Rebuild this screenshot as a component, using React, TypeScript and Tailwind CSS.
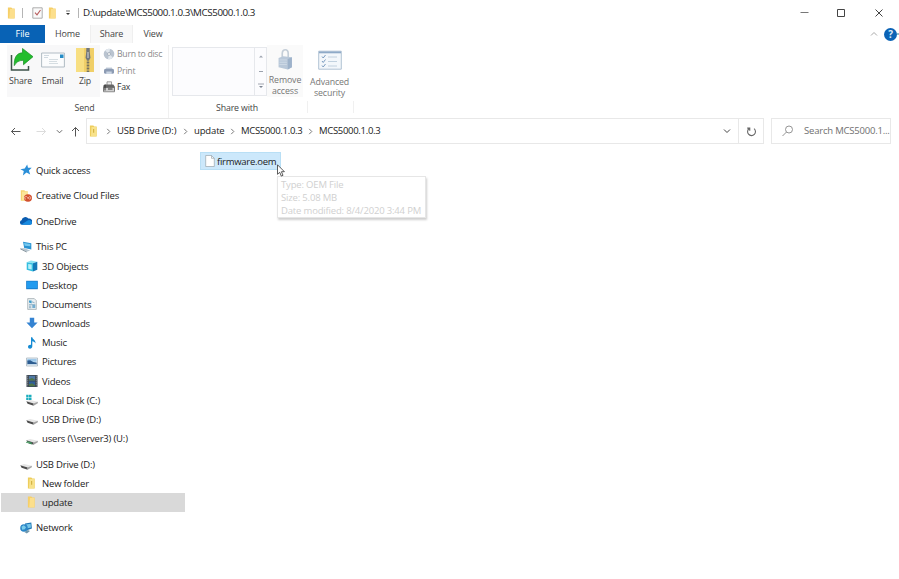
import type { ReactNode } from 'react';
import clsx from 'clsx';

type IconName =
    | 'star' | 'creative' | 'onedrive' | 'pc' | 'objects' | 'desktop' | 'documents' | 'downloads'
    | 'music' | 'pictures' | 'videos' | 'disk' | 'usb' | 'netdrive' | 'zipFolder' | 'folder' | 'network';

interface NavItem {
    label: string;
    icon: IconName;
    level: number;
    selected?: boolean;
}

const navGroups: NavItem[][] = [
    [{ label: 'Quick access', icon: 'star', level: 0 }],
    [{ label: 'Creative Cloud Files', icon: 'creative', level: 0 }],
    [{ label: 'OneDrive', icon: 'onedrive', level: 0 }],
    [
        { label: 'This PC', icon: 'pc', level: 0 },
        { label: '3D Objects', icon: 'objects', level: 1 },
        { label: 'Desktop', icon: 'desktop', level: 1 },
        { label: 'Documents', icon: 'documents', level: 1 },
        { label: 'Downloads', icon: 'downloads', level: 1 },
        { label: 'Music', icon: 'music', level: 1 },
        { label: 'Pictures', icon: 'pictures', level: 1 },
        { label: 'Videos', icon: 'videos', level: 1 },
        { label: 'Local Disk (C:)', icon: 'disk', level: 1 },
        { label: 'USB Drive (D:)', icon: 'usb', level: 1 },
        { label: 'users (\\\\server3) (U:)', icon: 'netdrive', level: 1 },
    ],
    [
        { label: 'USB Drive (D:)', icon: 'usb', level: 0 },
        { label: 'New folder', icon: 'zipFolder', level: 1 },
        { label: 'update', icon: 'folder', level: 1, selected: true },
    ],
    [{ label: 'Network', icon: 'network', level: 0 }],
];

const drive = (
    <>
        <path d="M.3 7.300 4 6.100l7.800 1.600L8 10.100z" fill="#e6e6e6" />
        <path d="M.3 7.300 7.600 9.500v2.200L1.600 9.800z" fill="#4d4d4d" />
        <path d="m7.600 9.500 4.200-1.800v1.600l-4.200 2.400z" fill="#a3a3a3" />
    </>
);

const icons: Record<IconName, ReactNode> = {
    star: <path d="m7.2.6.8 3.2 3.7-.1-2.8 2.700 1.300 4.100-3.700-1.900-3.600 3 .9-4.500L.4 5.200l4.300-.8z" fill="#2b8fd8" />,
    creative: (
        <>
            <path d="M.8.3h3.500l1 1h2.400v9.500H.8z" fill="#f5d470" />
            <path d="M2 1.600h6v9H2z" fill="#fbe59a" />
            <ellipse cx="8" cy="8" rx="4" ry="3.7" fill="#d2502f" />
            <path d="M6 9.200a1.400 1.400 0 1 1 1.300-2l1.600 1.600a1.200 1.200 0 1 0 .2-2L7.600 8.500" fill="none" stroke="#fbd0c0" strokeWidth=".7" />
        </>
    ),
    onedrive: (
        <>
            <path d="M2.200 9.800A2.300 2.300 0 0 1 1.600 5.300 3.800 3.800 0 0 1 8.400 3.600a3.100 3.100 0 0 1 1.400 6.200z" fill="#0a5cb0" />
            <path d="M1.500 9.500 7.600 5.600A2.800 2.800 0 0 1 12 7.900a2 2 0 0 1-2 1.900H2.200z" fill="#188be0" />
        </>
    ),
    pc: (
        <>
            <path d="m3 .8 8.300 1.400v6.200L4.200 7z" fill="#2a93d1" />
            <path d="m4 2 6.300 1v2.300L4.700 4.800z" fill="#74c8ef" />
            <path d="m.4 7.300 4.200-.1 5.600 2.300-3.500 1.200z" fill="#b6c5cf" />
            <path d="m.4 7.300 6.300 3.400v.8L.4 8.300z" fill="#6f7f8a" />
        </>
    ),
    objects: (
        <>
            <path d="M.7 2.200 5 .5l6.300 1.200L7 3.200z" fill="#8be3f3" />
            <path d="M.7 2.200 7 3.200v8.400L.7 9.800z" fill="#35bfe0" />
            <path d="m7 3.200 4.300-1.500v8.100L7 11.600z" fill="#1279b8" />
            <path d="M2.200 4 5.700 4.600v5L2.200 8.800z" fill="#b7f0f9" />
        </>
    ),
    desktop: (
        <>
            <path d="M.2 1.800h11.600v8.400H.2z" fill="#1374c4" />
            <path d="M.8 2.400h10.400v7H.8z" fill="#229bef" />
        </>
    ),
    documents: (
        <>
            <path d="M1.700.6h6.600l2 2v8.800H1.700z" fill="#eaf0f3" stroke="#98a3a9" strokeWidth=".7" />
            <path d="M3 2.600h2.600v3L3 4.600z" fill="#3f9ccb" />
            <path d="m6 3.800 2.600 1M3 6.700h6.200M3 8.200h2.300M3 9.700h2.300" stroke="#6d95b0" strokeWidth=".7" />
            <path d="M6.300 6.800h3v3.200h-3z" fill="#74add0" />
        </>
    ),
    downloads: <path d="M3.800.7h4.400v4.700h3.400L6 11.200.4 5.400h3.400z" fill="#3483d2" />,
    music: <path d="M5 .3h1.300c.3 2.400 3.700 2.700 3.200 6.300-.6-1.600-1.900-2.100-3.200-2.300v5c0 1.400-1 2.400-2.300 2.400S2 10.800 2 9.700s1.400-2.100 3-1.800z" fill="#168bd3" />,
    pictures: (
        <>
            <path d="M.5 2h11v8H.5z" fill="#f4f8fb" stroke="#9eacb6" strokeWidth=".7" />
            <path d="M1.300 2.800h9.400v3H1.300z" fill="#9cc8ea" />
            <path d="M1.300 4.500 4.200 4.300l3 1.800 3.500.5v1.800H1.300z" fill="#2c5c90" />
            <path d="M1.300 8h9.400v1.200H1.300z" fill="#c5daea" />
        </>
    ),
    videos: (
        <>
            <path d="M.5 0h11v12H.5z" fill="#3a444e" />
            <path d="M3 .8h6v4.800H3z" fill="#4f78a5" />
            <path d="M3 6.400h6v4.800H3z" fill="#30609a" />
            <path d="M3 4.200 6 3l3 1.800v.8H3zM3 9.200l3-1 3 2v1H3z" fill="#4f7548" />
            <path d="M1.700.7v10.600M10.300.7v10.600" stroke="#bcc4ca" strokeWidth=".8" strokeDasharray="1 1" />
        </>
    ),
    disk: (
        <>
            {drive}
            <path d="M.2.8h2.400v2.300H.2zM3 .8h2.500v2.300H3zM.2 3.500h2.400v2.400H.2zM3 3.500h2.500v2.400H3z" fill="#1baebe" />
        </>
    ),
    usb: drive,
    netdrive: (
        <>
            {drive}
            <path d="M1.300 8 5.800 9.400v2.200L1.300 10.100z" fill="#3e8a5a" />
            <path d="M0 9.400h3.500" stroke="#65aa79" strokeWidth="1" />
        </>
    ),
    zipFolder: (
        <>
            <path d="M1.900.6h3.400l1 1h2.400v9.800H1.900z" fill="#edcd5c" />
            <path d="M3.500 2h4.800v9.200H2.900z" fill="#f8e28b" />
            <path d="M5 4h1.200v3.800H5z" fill="#d4b446" />
        </>
    ),
    folder: (
        <>
            <path d="M1.900.6h3.400l1 1h2.400v9.800H1.900z" fill="#f6cf68" />
            <path d="M4 2h4.400v9.200H3.300z" fill="#fcdf8c" />
        </>
    ),
    network: (
        <>
            <path d="M5 1.400 11.300.5l.6 6-5.600 2z" fill="#1f77b4" />
            <path d="m6 2.400 4.600-.7.4 3.900-4.200 1z" fill="#76c6ea" />
            <circle cx="4" cy="6" r="3.8" fill="#2b86c7" />
            <path d="M1.500 4.800 3.800 3.200l2.200 2-1.200 2-2.600.6z" fill="#7accea" />
            <path d="m4.400 10 3.400-2 2.200 1-3.200 2.600z" fill="#6f97ad" />
        </>
    ),
};

function Icon({ name, className = 'size-3' }: { name: IconName; className?: string }) {
    return (
        <svg viewBox="0 0 12 12" className={clsx('shrink-0', className)}>
            {icons[name]}
        </svg>
    );
}

function Chevron({ className }: { className?: string }) {
    return (
        <svg viewBox="0 0 8 8" className={clsx('shrink-0 fill-none', className)} stroke="currentColor">
            <path d="m1 2.500 3 3 3-3" />
        </svg>
    );
}

function TitleBar() {
    return (
        <div className="flex h-[25px] items-center pl-[6px]">
            <Icon name="folder" />
            <div className="ml-[4px] h-[10px] w-px bg-[#b5b5b5]" />
            <svg viewBox="0 0 11 12" className="ml-[9px] h-3 w-[11px]" fill="none">
                <path d="M.8.8h9.400v10.400H.8z" fill="#fafafa" stroke="#999" strokeWidth=".8" />
                <path d="m3 5.700 2 2.200L8.500 3" stroke="#b65a5a" strokeWidth="1.1" />
            </svg>
            <Icon name="folder" className="ml-[4px] size-3" />
            <svg viewBox="0 0 6 6" className="ml-[6px] size-1.5">
                <path d="M1 1h4" stroke="#555" strokeWidth=".8" />
                <path d="M1 3h4L3 5z" fill="#333" />
            </svg>
            <div className="ml-[7px] h-[10px] w-px bg-[#b5b5b5]" />
            <span className="ml-[4px] pt-px text-[9.8px] tracking-[-0.42px] text-[#222]">D:\update\MCS5000.1.0.3\MCS5000.1.0.3</span>
            <svg viewBox="0 0 90 12" className="mr-[13px] ml-auto h-3 w-[90px]" fill="none" stroke="#444">
                <path d="M4.500 5.500h8" stroke="#777" />
                <path d="M41.500 2.500h7v7h-7z" />
                <path d="m79.500 2.500 7 7m0-7-7 7" />
            </svg>
        </div>
    );
}

function Tabs() {
    return (
        <div className="flex h-[18px] text-[9px] tracking-[-0.12px] text-[#444]">
            <div className="flex w-[45px] items-center justify-center bg-[#0862b5] text-white">File</div>
            <div className="flex w-[45px] items-center justify-center">Home</div>
            <div className="flex w-[43px] items-center justify-center border-x border-[#efefef] bg-[#f8f8f8]">Share</div>
            <div className="flex w-[40px] items-center justify-center">View</div>
            <div className="ml-auto flex items-center">
                <svg viewBox="0 0 8 8" className="mr-[6px] size-2" fill="none" stroke="#aaa">
                    <path d="m1 5.500 3-3 3 3" />
                </svg>
                <div className="flex size-[13px] items-center justify-center rounded-full bg-[#0b63b6] text-[10px] leading-none font-bold text-[#dcebf8]">?</div>
                <div className="h-[2px] w-[2px] bg-[#8fbcc8]" />
            </div>
        </div>
    );
}

function Ribbon() {
    return (
        <div className="flex h-[75px] pt-[2px] pl-[7px] text-[8.8px] leading-[11px] tracking-[-0.15px] text-[#444]">
            <div className="flex w-[162px] flex-col border-r border-[#f0f0f0]">
                <div className="flex h-[52px]">
                    <div className="flex w-[93px] bg-[#f8f8f9]">
                        <div className="flex w-[27px] flex-col items-center pt-[2px]">
                            <svg viewBox="0 0 26 25" className="h-[25px] w-[26px]">
                                <path d="M3.500 8v15H20.500V19" fill="none" stroke="#3d5149" strokeWidth="1.5" />
                                <path d="M14.500 1.500 25 9.700l-9.500 8v-4.400c-5 0-7.300 2-9.200 5.300C6 11 8.300 6 14.500 5.800z" fill="#22bd2d" stroke="#148c21" strokeWidth=".7" />
                            </svg>
                            <span className="mt-[4px]">Share</span>
                        </div>
                        <div className="flex w-[37px] flex-col items-center pt-[2px]">
                            <svg viewBox="0 0 24 25" className="h-[25px] w-6">
                                <path d="M.6 6h22.800v14H.6z" fill="#fbfcfd" stroke="#a9b5be" strokeWidth=".9" />
                                <path d="M19 7.500h3.500V11H19z" fill="#258cc6" />
                                <path d="M3 8.500h5M3 10.500h4" stroke="#bdcad3" strokeWidth=".7" />
                                <path d="M8 12.500h9M8 14.500h8M8 16.500h9" stroke="#ccd4da" strokeWidth=".8" />
                            </svg>
                            <span className="mt-[4px]">Email</span>
                        </div>
                        <div className="flex w-[28px] flex-col items-center pt-[2px]">
                            <svg viewBox="0 0 20 25" className="h-[25px] w-5">
                                <path d="M1 1h18v24H1z" fill="#f0cf68" />
                                <path d="M1 1h8v24H1z" fill="#f8df82" />
                                <path d="M13 3v22" stroke="#77735f" strokeWidth="2.6" strokeDasharray="1 .5" />
                                <path d="M11.300 1h3.400v4l.8 6-2.500 3-2.500-3 .8-6z" fill="#72777c" />
                                <path d="M13 5v6" stroke="#d8dadb" />
                            </svg>
                            <span className="mt-[4px]">Zip</span>
                        </div>
                    </div>
                    <div className="flex flex-col pt-px pl-[3px] text-[8.7px] tracking-[-0.3px] text-[#8a8a8a]">
                        <div className="flex h-[16.5px] items-center gap-[2px]">
                            <svg viewBox="0 0 12 12" className="size-3">
                                <circle cx="6" cy="6" r="5.3" fill="#bac4d0" />
                                <path d="M6 6 2 2.500A5 5 0 0 1 7 1zM6 6l4 3.500A5 5 0 0 1 5 11z" fill="#e2e8ee" />
                                <circle cx="6" cy="6" r="1.5" fill="#f7f7f7" stroke="#98a4b2" strokeWidth=".7" />
                            </svg>
                            <span className="pt-px tracking-[-0.28px]">Burn to disc</span>
                        </div>
                        <div className="flex h-[16.5px] items-center gap-[2px]">
                            <svg viewBox="0 0 12 12" className="size-3">
                                <path d="M3 2.500h6V6H3z" fill="#c7d0dc" />
                                <rect x="1" y="3.8" width="10" height="5" rx="1.5" fill="#8c9bb3" />
                                <path d="M3.300 6.500h5.400V9H3.300z" fill="#cbd5e2" />
                            </svg>
                            <span className="pt-px tracking-[-0.2px]">Print</span>
                        </div>
                        <div className="flex h-[16.5px] items-center gap-[2px] text-[#333]">
                            <svg viewBox="0 0 12 12" className="size-3">
                                <path d="M4 .8h4.500v4H4z" fill="#eee" stroke="#777" strokeWidth=".7" />
                                <path d="m.3 4.500 2-1h8l1.400 2v4.500H.3z" fill="#666" />
                                <path d="M.5 6.500h11v4.300H.5z" fill="#cfcfcf" stroke="#555" strokeWidth=".6" />
                                <path d="M2 3.500v6M5 8h4.500" stroke="#333" />
                            </svg>
                            <span className="pt-px">Fax</span>
                        </div>
                    </div>
                </div>
                <div className="mt-[6px] -ml-[6px] text-center">Send</div>
            </div>
            <div className="flex w-[138px] flex-col">
                <div className="flex h-[52px] pl-[3px]">
                    <div className="mt-[2px] flex h-[49px] w-[95px] shrink-0 border border-[#e6e8ec] bg-[#fcfcfe]">
                        <div className="flex-1" />
                        <div className="flex w-[12px] flex-col items-center justify-between border-l border-[#e6e8ec] py-[6px]">
                            <svg viewBox="0 0 6 5" className="h-[5px] w-1.5"><path d="m1 3.500 2-2 2 2z" fill="#9ba2ad" /></svg>
                            <div className="h-px w-1 bg-[#9ba2ad]" />
                            <svg viewBox="0 0 6 6" className="size-1.5"><path d="M0 1h6" stroke="#8a919d" strokeWidth=".8" /><path d="M1 3h4L3 5z" fill="#7b8391" /></svg>
                        </div>
                    </div>
                    <div className="flex w-[36px] shrink-0 flex-col items-center bg-[#fafafa] pt-[3px] text-center text-[#777]">
                        <svg viewBox="0 0 18 25" className="h-[25px] w-[18px]">
                            <path d="M6 11V6c0-5.500 6.500-5.500 6.500 0v6" fill="none" stroke="#c4ced8" strokeWidth="1.8" />
                            <path d="m2 11 5-2 9.500 1v11L12 23.500 2 21z" fill="#b9c8d9" />
                            <path d="m12 12 4.500-2v11L12 23.500z" fill="#9db2ca" />
                            <path d="M3 13h8M3 15.500h8M3 18h8" stroke="#d5dfeb" strokeWidth=".8" />
                        </svg>
                        <span className="mt-[4px] tracking-[-0.1px]">Remove access</span>
                    </div>
                </div>
                <div className="mt-[6px] mr-[2px] text-center">Share with</div>
            </div>
            <div className="flex w-[47px] flex-col items-center pt-[2px] text-center text-[#777]">
                <svg viewBox="0 0 24 25" className="mr-[2px] h-[25px] w-6">
                    <path d="M.7 4.200h22.600v18H.7z" fill="#f3f7fb" stroke="#a9bccf" strokeWidth=".9" />
                    <path d="M1 4.500h22v1.800H1z" fill="#8faac8" />
                    <path d="M4 9.500 5.200 11 7.500 8M4 14l1.200 1.500 2.300-3M4 18.500 5.200 20l2.300-3" fill="none" stroke="#7a9bc0" />
                    <path d="M10 10h9M10 14.500h9M10 19h9" stroke="#b4c6d8" strokeWidth=".8" />
                </svg>
                <span className="mt-[5px] mr-[2px] w-[40px] tracking-[-0.14px]">Advanced security</span>
                <div className="mt-[2px] h-3 w-full border-x border-[#f0f0f0]" />
            </div>
        </div>
    );
}

function AddressBar() {
    const path = [
        { label: 'USB Drive (D:)', width: 'w-[77px]' },
        { label: 'update', width: 'w-[47px]' },
        { label: 'MCS5000.1.0.3', width: 'w-[78px]' },
        { label: 'MCS5000.1.0.3', width: 'w-[78px]' },
    ];

    return (
        <div className="flex h-[26px] items-stretch pr-2 text-[9.5px] tracking-[-0.3px] text-[#222]">
            <div className="flex w-[86px] shrink-0 items-center pl-[10px]">
                <svg viewBox="0 0 12 12" className="size-3" fill="none" stroke="#555"><path d="M10.500 6.500H1.500m3.500-3.500-3.500 3.500 3.500 3.500" /></svg>
                <svg viewBox="0 0 12 12" className="ml-[13px] size-3" fill="none" stroke="#dcdcdc"><path d="M1.500 6.500h9m-3.500-3.500 3.500 3.500-3.500 3.500" /></svg>
                <Chevron className="ml-[9px] size-[7px] text-[#555]" />
                <svg viewBox="0 0 12 12" className="ml-[6px] h-3 w-3" fill="none" stroke="#555"><path d="M6.500 11.500V2.500m-3.500 3.500 3.500-3.500 3.500 3.500" /></svg>
            </div>
            <div className="flex w-[653px] shrink-0 items-center border border-[#e8e8e8]">
                <Icon name="zipFolder" className="ml-px size-3" />
                {path.map((part, i) => (
                    <div key={i} className={clsx('flex items-center', part.width)}>
                        <Chevron className="mr-[5px] ml-[5px] size-[7px] -rotate-90 text-[#666]" />
                        <span className={clsx('whitespace-nowrap', i < 2 && 'tracking-[-0.15px]')}>{part.label}</span>
                    </div>
                ))}
                <Chevron className="mr-[7px] ml-auto size-2 text-[#444]" />
            </div>
            <div className="flex w-[25px] shrink-0 items-center justify-center border border-l-0 border-[#e8e8e8]">
                <svg viewBox="0 0 12 12" className="size-[11px]" fill="none" stroke="#666" strokeWidth="1.2">
                    <path d="M3.500 2.700A4.300 4.300 0 1 0 8.800 2.900M1.300 2.300h2.800v3" />
                </svg>
            </div>
            <div className="ml-[7px] flex min-w-0 flex-1 items-center border border-[#e8e8e8] pl-[10px] text-[#707070]">
                <svg viewBox="0 0 12 12" className="size-3 shrink-0" fill="none" stroke="#888" strokeWidth=".9">
                    <circle cx="7" cy="4.5" r="3.5" />
                    <path d="m4.500 7-4 4" />
                </svg>
                <span className="ml-[10px] tracking-[-0.2px] whitespace-nowrap">Search MCS5000.1...</span>
            </div>
        </div>
    );
}

function NavPane() {
    return (
        <nav className="flex w-[186px] flex-col gap-[6.3px] pt-[16.8px] text-[9.5px] tracking-[-0.18px] text-[#222]">
            {navGroups.map((group, i) => (
                <div key={i}>
                    {group.map((item) => (
                        <div
                            key={item.label}
                            className={clsx(
                                'mr-px ml-px flex h-[19.18px] items-center gap-[4px]',
                                item.level ? 'pl-[25px]' : 'pl-[19px]',
                                item.selected && 'bg-[#d9d9d9]',
                            )}
                        >
                            <Icon name={item.icon} />
                            <span className="pt-[1.4px] whitespace-nowrap">{item.label}</span>
                        </div>
                    ))}
                </div>
            ))}
        </nav>
    );
}

function FilePane() {
    return (
        <main className="flex-1 pt-[8px] pl-[14px]">
            <div className="relative flex h-[18px] w-[81px] items-center border border-[#b9dff5] bg-[#cce8fb] pl-[4px] text-[9.5px] text-[#222]">
                <svg viewBox="0 0 10 12" className="h-3 w-[10px]">
                    <path d="M.7.5h5.800l2.800 2.800v8.200H.7z" fill="#fff" stroke="#9aa5ac" strokeWidth=".7" />
                    <path d="M6.500.5v2.800h2.800" fill="none" stroke="#9aa5ac" strokeWidth=".7" />
                </svg>
                <span className="ml-[2px] pt-[2px] tracking-[-0.27px]">firmware.oem</span>
                <div className="absolute top-[23px] left-[76px] h-[42px] w-[149px] border border-[#e6e6e6] bg-white pt-px pl-[3px] text-[9.5px] leading-[13px] tracking-[-0.17px] whitespace-nowrap text-[#d0d0d0] shadow-[1px_2px_2px_#cfcfcf]">
                    <p>Type: OEM File</p>
                    <p>Size: 5.08 MB</p>
                    <p>Date modified: 8/4/2020 3:44 PM</p>
                </div>
                <svg viewBox="0 0 9 13" className="absolute top-[11px] left-[75px] h-[13px] w-[9px]">
                    <path d="M1.500.8v9.500l2.200-2 1.600 3.800 1.700-.8-1.600-3.600h3z" fill="#fff" stroke="#333" strokeWidth=".8" />
                </svg>
            </div>
        </main>
    );
}

export default function App() {
    return (
        <div className="flex h-[579px] w-[899px] flex-col overflow-hidden bg-white font-['Open_Sans','Noto_Sans',sans-serif]">
            <TitleBar />
            <Tabs />
            <Ribbon />
            <AddressBar />
            <div className="flex min-h-0 flex-1">
                <NavPane />
                <FilePane />
            </div>
        </div>
    );
}
